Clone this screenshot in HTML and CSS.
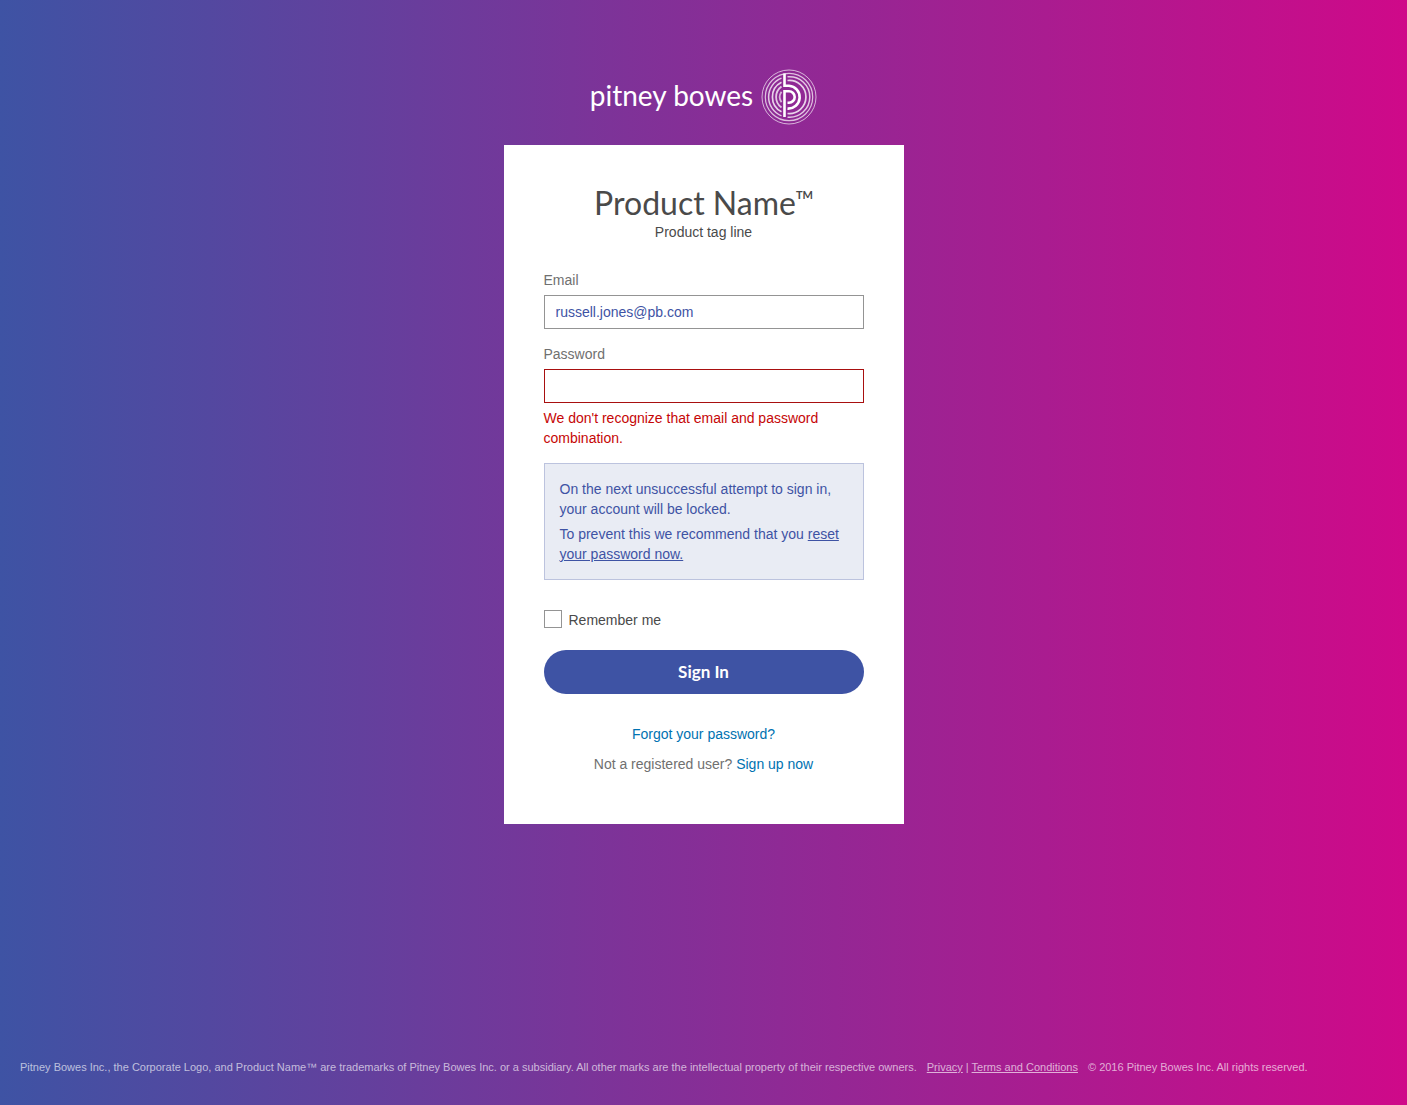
FILE: index.html
```html
<!DOCTYPE html>
<html lang="en">
<head>
<meta charset="utf-8">
<meta name="viewport" content="width=device-width, initial-scale=1">
<title>Sign In - Product Name</title>
<link rel="stylesheet" href="styles.css">
</head>
<body class="page">
<header class="brand">
  <span class="brand-name">pitney bowes</span>
  <svg class="brand-mark" viewBox="0 0 56 56" fill="none" stroke="#fff" aria-hidden="true">
    <circle cx="28" cy="28" r="27" stroke-width="1" opacity=".65"/>
    <circle cx="28" cy="28" r="23.7" stroke-width="1.2" opacity=".7"/>
    <path d="M20.5 9.1A20.3 20.3 0 0 0 20.5 46.9M26.5 7.8A20.3 20.3 0 1 1 26.5 48.2" stroke-width="1.5" opacity=".75"/>
    <path d="M20.5 13.2A16.6 16.6 0 0 0 20.5 42.8M26.5 11.5A16.6 16.6 0 1 1 26.5 44.5" stroke-width="1.7" opacity=".8"/>
    <path d="M20.5 17.5A12.9 12.9 0 0 0 20.5 38.5" stroke-width="1.8" opacity=".75"/>
    <path d="M20.5 22.8A9 9 0 0 0 20.5 33.2" stroke-width="1.8" opacity=".65"/>
    <path d="M23.5 4.5V16.8H28A11.4 11.4 0 1 1 26.5 39.6" stroke-width="2.6"/>
    <path d="M23.5 48V22.3H28A5.7 5.7 0 0 1 28 33.7H26.5" stroke-width="2.6"/>
  </svg>
</header>
<main class="card">
  <h1 class="title">Product Name<sup class="tm">TM</sup></h1>
  <p class="tagline">Product tag line</p>
  <form class="form">
    <div class="field">
      <label class="label" for="email">Email</label>
      <input class="input" id="email" type="email" value="russell.jones@pb.com">
    </div>
    <div class="field">
      <label class="label" for="password">Password</label>
      <input class="input input-error" id="password" type="password" aria-describedby="password-error">
      <p class="error" id="password-error">We don't recognize that email and password combination.</p>
    </div>
    <div class="notice">
      <p>On the next unsuccessful attempt to sign in, your account will be locked.</p>
      <p>To prevent this we recommend that you <a href="#reset">reset your password now.</a></p>
    </div>
    <div class="remember">
      <input class="checkbox" id="remember" type="checkbox">
      <label for="remember">Remember me</label>
    </div>
    <button class="submit" type="submit">Sign In</button>
  </form>
  <nav class="links">
    <a href="#forgot">Forgot your password?</a>
    <p>Not a registered user? <a href="#signup">Sign up now</a></p>
  </nav>
</main>
<footer class="footer">
  <span>Pitney Bowes Inc., the Corporate Logo, and Product Name™ are trademarks of Pitney Bowes Inc. or a subsidiary. All other marks are the intellectual property of their respective owners.</span>
  <span><a href="#privacy">Privacy</a> | <a href="#terms">Terms and Conditions</a></span>
  <span>© 2016 Pitney Bowes Inc. All rights reserved.</span>
</footer>
</body>
</html>
```
FILE: styles.css
```css
* {
  box-sizing: border-box;
}

p,
h1 {
  margin: 0;
}

.page {
  display: flex;
  flex-direction: column;
  align-items: center;
  min-height: 100vh;
  margin: 0;
  background: linear-gradient(to right, #3e53a4, #cf0989);
  color: #4a4a4a;
  font: 14px/20px "Liberation Sans", Arial, sans-serif;
}

.brand {
  display: flex;
  align-items: center;
  gap: 8px;
  margin: 69px 0 20px;
}

.brand-name {
  padding-bottom: 4px;
  color: #fff;
  font: 28px/48px Lato, sans-serif;
}

.brand-mark {
  width: 56px;
  height: 56px;
}

.card {
  width: 100%;
  max-width: 400px;
  padding: 40px 40px 50px;
  background: #fff;
}

.title {
  font: 400 32px/36px Lato, sans-serif;
  text-align: center;
}

.tm {
  font-size: 11px;
  font-weight: 700;
  line-height: 0;
  vertical-align: 16px;
}

.tagline {
  margin-top: 1px;
  text-align: center;
}

.form {
  margin-top: 28px;
}

.field {
  margin-bottom: 15px;
}

.label {
  display: block;
  margin-bottom: 5px;
  color: #707070;
}

.input {
  display: block;
  width: 100%;
  height: 34px;
  padding: 0 11px;
  border: 1px solid #949494;
  border-radius: 0;
  background: #fff;
  color: #3e53a4;
  font: inherit;
}

.input-error {
  border-color: #a80f0f;
}

.error {
  margin-top: 5px;
  color: #c60606;
}

.notice {
  display: grid;
  gap: 5px;
  padding: 15px;
  border: 1px solid #bcc3de;
  background: #e9ecf4;
  color: #3e53a4;
}

.notice a {
  color: inherit;
}

.remember {
  display: flex;
  align-items: flex-start;
  gap: 7px;
  margin: 30px 0 20px;
}

.checkbox {
  appearance: none;
  width: 18px;
  height: 18px;
  margin: 0;
  border: 1px solid #949494;
  background: #fff;
}

.checkbox:checked {
  background: #3e53a4;
}

.submit {
  display: block;
  width: 100%;
  height: 44px;
  border: 0;
  border-radius: 22px;
  background: #3e53a4;
  color: #fff;
  font: 700 17px/24px Lato, sans-serif;
}

.links {
  display: grid;
  gap: 10px;
  margin-top: 30px;
  color: #707070;
  text-align: center;
}

.links a {
  color: #0072b1;
  text-decoration: none;
}

.footer {
  display: flex;
  flex-wrap: wrap;
  align-self: stretch;
  gap: 0 10px;
  margin-top: auto;
  padding: 20px 20px 28px;
  color: rgba(255, 255, 255, 0.65);
  font-size: 11px;
}

.footer a {
  color: inherit;
}
```
